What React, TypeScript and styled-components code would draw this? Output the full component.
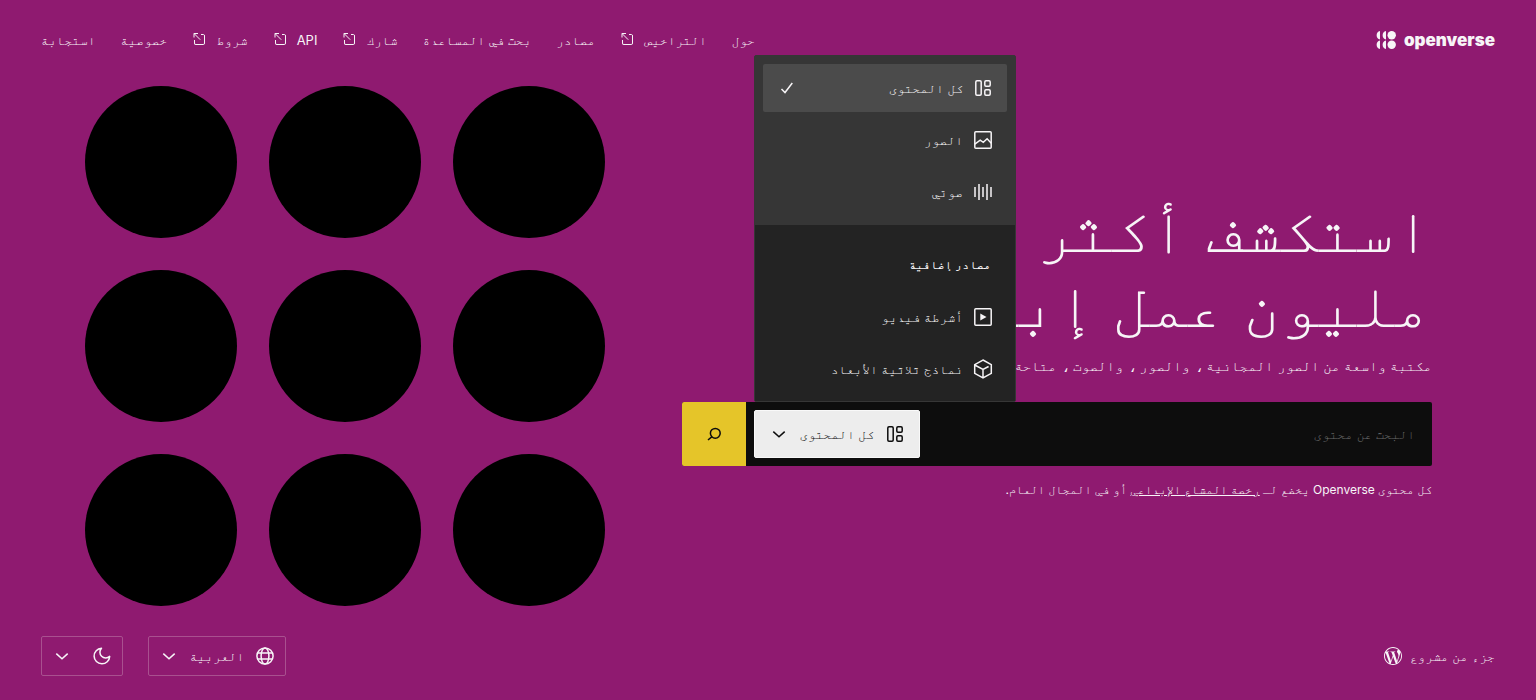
import React from "react";
import styled, { createGlobalStyle } from "styled-components";

const GlobalStyle = createGlobalStyle`
  *, *::before, *::after { box-sizing: border-box; }
  body {
    margin: 0;
    background: #8f1a70;
    color: #f7f5f7;
    font-family: Inter, FreeMono, "DejaVu Sans Mono", sans-serif;
    font-size: 13px;
    line-height: 20px;
  }
  button, input { font: inherit; color: inherit; }
  a { color: inherit; }
  svg { display: block; flex: none; }
`;

const Page = styled.div`
  display: flex;
  flex-direction: column;
  min-height: 100vh;
`;

const Header = styled.header`
  display: flex;
  align-items: center;
  justify-content: space-between;
  height: 80px;
  padding: 0 41px;
`;

const Logo = styled.a`
  display: flex;
  align-items: center;
  gap: 8px;
  text-decoration: none;
  font-size: 17px;
  font-weight: 900;
`;

const Nav = styled.nav`
  display: flex;
  gap: 25px;
`;

const NavLink = styled.a`
  display: flex;
  align-items: center;
  gap: 8px;
  text-decoration: none;
`;

const Main = styled.main`
  flex: 1;
  display: flex;
  align-items: center;
  justify-content: space-between;
  padding: 0 104px 0 85px;
`;

const Hero = styled.section`
  width: 750px;
  min-width: 0;
`;

const Title = styled.h1`
  margin: 0;
  font-size: 63px;
  font-weight: 400;
  line-height: 75px;
`;

const Subtitle = styled.p`
  margin: 12px 0 0;
  font-size: 14px;
  line-height: 24px;
`;

const SearchForm = styled.form`
  position: relative;
  display: flex;
  height: 64px;
  margin-top: 24px;
  border-radius: 2px;
  background: #0d0d0d;
`;

const SearchInput = styled.input`
  flex: 1;
  min-width: 0;
  padding: 0 17px;
  border: 0;
  outline: 0;
  background: transparent;
  &::placeholder { color: #6c6c6c; opacity: 1; }
`;

const TypeButton = styled.button`
  display: flex;
  align-items: center;
  justify-content: space-between;
  min-width: 166px;
  height: 48px;
  margin: 8px;
  padding: 0 12px;
  border: 1px solid #f9f9f9;
  border-radius: 2px;
  background: #ededed;
  color: #0d0d0d;
`;

const SubmitButton = styled.button`
  display: grid;
  place-items: center;
  width: 64px;
  border: 0;
  border-radius: 2px 0 0 2px;
  background: #e5c529;
  color: #0d0d0d;
`;

const Menu = styled.div`
  position: absolute;
  bottom: 100%;
  left: 72px;
  width: 262px;
  border: 1px solid #363636;
  border-radius: 2px;
  background: #363636;
`;

const MenuGroup = styled.div<{ $dark?: boolean }>`
  display: flex;
  flex-direction: column;
  gap: 4px;
  padding: ${(p) => (p.$dark ? "16px 8px 8px" : "8px")};
  border-bottom: ${(p) => (p.$dark ? "0" : "1px solid #363636")};
  background: ${(p) => (p.$dark ? "#232323" : "#363636")};
`;

const MenuHeading = styled.h2`
  margin: 0;
  padding: 0 16px;
  font-size: 12px;
  font-weight: 600;
  line-height: 48px;
`;

const MenuItem = styled.button<{ $selected?: boolean }>`
  display: flex;
  align-items: center;
  gap: 8px;
  height: 48px;
  padding: 0 12px;
  border: 0;
  border-radius: 2px;
  background: ${(p) => (p.$selected ? "#4b4b4b" : "transparent")};
`;

const MenuLabel = styled.span`
  flex: 1;
  text-align: start;
`;

const Note = styled.p`
  margin: 14px 0 0;
  font-size: 12px;
  line-height: 20px;
`;

const Circles = styled.div`
  display: grid;
  grid-template-columns: repeat(3, 152px);
  gap: 32px;
`;

const Circle = styled.a`
  height: 152px;
  border-radius: 50%;
  background: #000;
`;

const Footer = styled.footer`
  display: flex;
  align-items: center;
  justify-content: space-between;
  padding: 24px 41px;
`;

const Project = styled.a`
  display: flex;
  align-items: center;
  gap: 8px;
  text-decoration: none;
`;

const Settings = styled.div`
  display: flex;
  gap: 25px;
`;

const SettingButton = styled.button<{ $wide?: boolean }>`
  display: flex;
  align-items: center;
  justify-content: space-between;
  width: ${(p) => (p.$wide ? "138px" : "82px")};
  height: 40px;
  padding: 0 8px;
  border: 1px solid #a9508f;
  border-radius: 2px;
  background: transparent;
`;

type IconProps = { width?: number; children: React.ReactNode };
const Icon = ({ width = 1.5, children }: IconProps) => (
  <svg width="24" height="24" viewBox="0 0 24 24" fill="none" stroke="currentColor" strokeWidth={width} aria-hidden="true">
    {children}
  </svg>
);

const ExternalIcon = () => (
  <svg width="16" height="16" viewBox="0 0 16 16" fill="none" stroke="currentColor" aria-hidden="true">
    <path d="M2 5.500V1.500h4M2.200 1.700l6 6M9 2.500h2.500A1.300 1.300 0 0 1 12.500 4v7a1.300 1.300 0 0 1-1.300 1.500H4A1.300 1.300 0 0 1 2.500 11V8" />
  </svg>
);
const AllIcon = () => (
  <Icon>
    <rect x="4.800" y="4.800" width="5.400" height="14.400" rx="1.200" />
    <rect x="13.800" y="4.800" width="5.400" height="5.400" rx="1.200" />
    <rect x="13.800" y="13.800" width="5.400" height="5.400" rx="1.200" />
  </Icon>
);
const ImageIcon = () => (
  <Icon>
    <rect x="3.800" y="3.800" width="16.400" height="16.400" rx="1" />
    <path d="M3.800 16.200l5.400-4 3.100 2.200 3.800-3.600 4.200 4.500" />
  </Icon>
);
const AudioIcon = () => (
  <Icon><path d="M4 7v10M8 4v16M12 7v10M16 4v16M20 7v10" /></Icon>
);
const VideoIcon = () => (
  <Icon>
    <rect x="3.800" y="3.800" width="16.400" height="16.400" rx="1" />
    <path d="M9.300 8.400l6.200 3.600-6.200 3.600z" fill="currentColor" stroke="none" />
  </Icon>
);
const ModelIcon = () => (
  <Icon><path d="M12 3l8.300 4.600v8.800L12 21l-8.300-4.600V7.600zM3.700 8l8.300 4.500L17.600 9.500M12 12.500V21" /></Icon>
);
const CheckIcon = () => <Icon><path d="M6.500 13l3.500 3.500 7.300-9.500" /></Icon>;
const ChevronIcon = () => <Icon><path d="M6.300 9.600l5.700 5.200 5.700-5.200" /></Icon>;
const SearchIcon = () => (
  <Icon><circle cx="13.300" cy="11.300" r="4.900" /><path d="M10 14.600L6 18" /></Icon>
);
const GlobeIcon = () => (
  <Icon>
    <circle cx="12" cy="12" r="8.100" />
    <ellipse cx="12" cy="12" rx="3.900" ry="8.100" />
    <path d="M4.600 8.900h14.800M4.600 15.100h14.800" />
  </Icon>
);
const MoonIcon = () => (
  <Icon><path d="M11.500 4.200a5.800 5.800 0 0 0 8.200 8.200 7.800 7.800 0 1 1-8.200-8.200z" strokeLinejoin="round" /></Icon>
);
const LogoMark = () => (
  <svg width="20" height="18" viewBox="0 0 20 18" fill="currentColor" aria-hidden="true">
    <circle cx="15.700" cy="4.200" r="4.200" />
    <circle cx="15.700" cy="13.800" r="4.200" />
    <path d="M10 0v8.400a4.300 4.300 0 0 1 0-8.400zM10 9.600V18a4.300 4.300 0 0 1 0-8.400zM4 0v8.400A4.300 4.300 0 0 1 4 0zM4 9.600V18a4.300 4.300 0 0 1 0-8.400z" />
  </svg>
);
const WordPressIcon = () => (
  <svg width="18" height="18" viewBox="0 0 24 24" fill="currentColor" aria-hidden="true">
    <path d="M21.469 6.825c.84 1.537 1.318 3.300 1.318 5.175 0 3.979-2.156 7.456-5.363 9.325l3.295-9.527c.615-1.540.82-2.771.82-3.864 0-.405-.026-.780-.070-1.110m-7.981.105c.647-.030 1.232-.105 1.232-.105.582-.075.514-.930-.067-.899 0 0-1.755.135-2.880.135-1.064 0-2.850-.150-2.850-.150-.585-.030-.661.855-.075.885 0 0 .540.061 1.125.090l1.680 4.605-2.370 7.080L5.354 6.900c.649-.030 1.234-.100 1.234-.100.585-.075.516-.930-.065-.896 0 0-1.746.138-2.874.138-.200 0-.438-.008-.690-.015C4.911 3.150 8.235 1.215 12 1.215c2.809 0 5.365 1.072 7.286 2.833-.046-.003-.091-.009-.141-.009-1.060 0-1.812.923-1.812 1.914 0 .890.513 1.643 1.060 2.531.411.720.890 1.643.890 2.977 0 .915-.354 1.994-.821 3.479l-1.075 3.585-3.900-11.610zM12 22.784c-1.059 0-2.081-.153-3.048-.437l3.237-9.406 3.315 9.087c.024.053.050.101.078.149-1.120.393-2.325.607-3.582.607M1.211 12c0-1.564.336-3.050.935-4.390L7.290 21.709C3.694 19.960 1.212 16.271 1.211 12M12 0C5.385 0 0 5.385 0 12s5.385 12 12 12 12-5.385 12-12S18.615 0 12 0" />
  </svg>
);

const links = [
  { label: "حول" },
  { label: "التراخيص", external: true },
  { label: "مصادر" },
  { label: "بحث في المساعدة" },
  { label: "شارك", external: true },
  { label: "API", external: true },
  { label: "شروط", external: true },
  { label: "خصوصية" },
  { label: "استجابة" },
];

export default function App() {
  return (
    <Page dir="rtl" lang="ar">
      <GlobalStyle />
      <Header>
        <Logo href="#" dir="ltr">
          <LogoMark />
          openverse
        </Logo>
        <Nav>
          {links.map((l) => (
            <NavLink href="#" key={l.label}>
              {l.label}
              {l.external && <ExternalIcon />}
            </NavLink>
          ))}
        </Nav>
      </Header>
      <Main>
        <Hero>
          <Title>
            استكشف أكثر من 800
            <br />
            مليون عمل إبداعي
          </Title>
          <Subtitle>مكتبة واسعة من الصور المجانية ، والصور ، والصوت ، متاحة للاستخدام المجاني.</Subtitle>
          <SearchForm>
            <SearchInput type="search" placeholder="البحث عن محتوى" aria-label="البحث عن محتوى" />
            <TypeButton type="button" aria-expanded="true">
              <AllIcon />
              كل المحتوى
              <ChevronIcon />
            </TypeButton>
            <SubmitButton type="submit" aria-label="بحث">
              <SearchIcon />
            </SubmitButton>
            <Menu>
              <MenuGroup>
                <MenuItem type="button" $selected>
                  <AllIcon />
                  <MenuLabel>كل المحتوى</MenuLabel>
                  <CheckIcon />
                </MenuItem>
                <MenuItem type="button">
                  <ImageIcon />
                  <MenuLabel>الصور</MenuLabel>
                </MenuItem>
                <MenuItem type="button">
                  <AudioIcon />
                  <MenuLabel>صوتي</MenuLabel>
                </MenuItem>
              </MenuGroup>
              <MenuGroup $dark>
                <MenuHeading>مصادر إضافية</MenuHeading>
                <MenuItem type="button">
                  <VideoIcon />
                  <MenuLabel>أشرطة فيديو</MenuLabel>
                </MenuItem>
                <MenuItem type="button">
                  <ModelIcon />
                  <MenuLabel>نماذج ثلاثية الأبعاد</MenuLabel>
                </MenuItem>
              </MenuGroup>
            </Menu>
          </SearchForm>
          <Note>
            كل محتوى Openverse يخضع لـ <a href="#">رخصة المشاع الإبداعي</a> أو في المجال العام.
          </Note>
        </Hero>
        <Circles>
          {Array.from({ length: 9 }, (_, i) => (
            <Circle href="#" key={i} aria-label={`مجموعة ${i + 1}`} />
          ))}
        </Circles>
      </Main>
      <Footer>
        <Project href="#">
          جزء من مشروع
          <WordPressIcon />
        </Project>
        <Settings>
          <SettingButton type="button" $wide>
            <GlobeIcon />
            العربية
            <ChevronIcon />
          </SettingButton>
          <SettingButton type="button" aria-label="المظهر">
            <MoonIcon />
            <ChevronIcon />
          </SettingButton>
        </Settings>
      </Footer>
    </Page>
  );
}
